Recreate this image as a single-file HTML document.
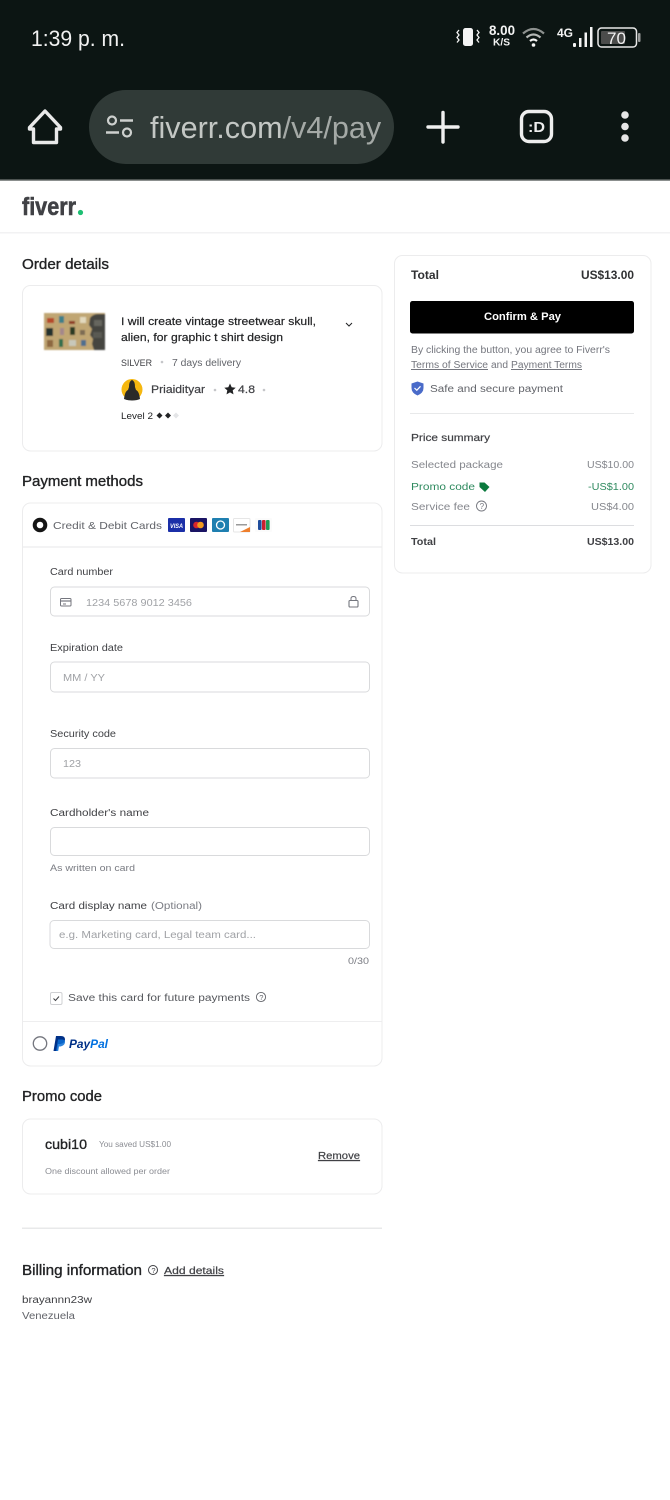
<!DOCTYPE html>
<html lang="en"><head><meta charset="utf-8"><title>Fiverr payment</title>
<style>
html,body{margin:0;padding:0;background:#fff}
svg{display:block;font-family:"Liberation Sans",sans-serif}
.root{filter:blur(.35px)}
text{white-space:pre}
.m{stroke-width:.2px;paint-order:stroke}
.h{font-size:14.5px;fill:#222325;stroke:#222325;stroke-width:.35px}
.l{font-size:10px;fill:#404145}
.p{font-size:10px;fill:#a0a2a6}
.s{font-size:10px;fill:#74767e}
.u{text-decoration:underline}
.box{fill:#fff;stroke:#ececed;stroke-width:1}
.inp{fill:#fff;stroke:#d9dadc;stroke-width:1}
</style></head><body>
<svg class="root" width="670" height="1500" viewBox="0 0 670 1500" xmlns="http://www.w3.org/2000/svg">
<defs><filter id="b" x="-5%" y="-5%" width="110%" height="110%"><feGaussianBlur stdDeviation=".7"/></filter></defs>
<rect width="670" height="1500" fill="#fff"/>
<!-- status + toolbar -->
<rect width="670" height="180" fill="#0c1513"/>
<rect y="179.500" width="670" height="1.500" fill="#8b8f8e"/>
<text x="31" y="46" font-size="22" fill="#f1f1f1" textLength="94" lengthAdjust="spacingAndGlyphs">1:39 p. m.</text>
<rect x="463" y="28" width="10" height="18" rx="2.500" fill="#f4f4f4"/>
<path d="M459 30l-2 2.500 2 2.500-2 2.500 2 2.500-2 2.500M477 30l2 2.500-2 2.500 2 2.500-2 2.500 2 2.500" fill="none" stroke="#f4f4f4" stroke-width="1.300"/>
<text x="489" y="35" font-size="13.500" font-weight="700" fill="#f4f4f4" textLength="26" lengthAdjust="spacingAndGlyphs">8.00</text>
<text x="493" y="45.500" font-size="10" font-weight="700" fill="#f4f4f4" textLength="17" lengthAdjust="spacingAndGlyphs">K/S</text>
<path d="M523 33.500q10.500-9 21 0" fill="none" stroke="#8d918f" stroke-width="2.200"/>
<path d="M526.500 37.500q7-6 14 0" fill="none" stroke="#b5b8b6" stroke-width="2.200"/>
<path d="M530 41q3.500-3 7 0" fill="none" stroke="#f4f4f4" stroke-width="2.200"/>
<circle cx="533.500" cy="45" r="1.800" fill="#f4f4f4"/>
<text x="557" y="37" font-size="12" font-weight="700" fill="#f4f4f4" textLength="16" lengthAdjust="spacingAndGlyphs">4G</text>
<rect x="573" y="43" width="3" height="4" rx="1" fill="#f4f4f4"/>
<rect x="579" y="38" width="2.500" height="9" fill="#f4f4f4"/>
<rect x="584.500" y="32.500" width="2.500" height="14.500" fill="#f4f4f4"/>
<rect x="590" y="27" width="2.500" height="20" fill="#f4f4f4"/>
<rect x="598" y="28" width="38.500" height="19" rx="3.500" fill="none" stroke="#e8e8e8" stroke-width="1.500"/>
<rect x="601" y="31" width="24" height="13" rx="1" fill="#4b4c4b"/>
<rect x="638" y="33" width="2.500" height="9" rx="1" fill="#9a9c9b"/>
<text x="607" y="44" font-size="16.500" fill="#f1f1f1" textLength="19" lengthAdjust="spacingAndGlyphs">70</text>

<path d="M45 111L29.500 127.500V129H33.500V142.500H56.500V129H60.500V127.500Z" fill="none" stroke="#e9e9e9" stroke-width="3.400" stroke-linejoin="round"/>
<rect x="89" y="90" width="305" height="74" rx="37" fill="#303a37"/>
<circle cx="112" cy="120.500" r="4" fill="none" stroke="#cdd0ce" stroke-width="2.200"/>
<path d="M120 120.500H133M106 132.500H119" stroke="#cdd0ce" stroke-width="2.500" fill="none"/>
<circle cx="127" cy="132.500" r="4" fill="none" stroke="#cdd0ce" stroke-width="2.200"/>
<svg x="150" y="100" width="231" height="56" viewBox="150 100 231 56"><text x="150" y="138" font-size="30.600" fill="#c3c7c4">fiverr.com<tspan fill="#a4a9a6">/v4/pay</tspan></text></svg>
<path d="M428 127H458M443 112.500V142" stroke="#f0f0f0" stroke-width="3.400" stroke-linecap="round"/>
<rect x="521.500" y="111.500" width="30" height="30" rx="7.500" fill="none" stroke="#eeeeee" stroke-width="3.400"/>
<text x="528" y="132" font-size="15" font-weight="700" fill="#eeeeee" textLength="17" lengthAdjust="spacingAndGlyphs">:D</text>
<circle cx="625" cy="115" r="3.800" fill="#e6e6e6"/><circle cx="625" cy="126.500" r="3.800" fill="#e6e6e6"/><circle cx="625" cy="138" r="3.800" fill="#e6e6e6"/>

<!-- header -->
<text x="22" y="215" font-size="25" font-weight="700" fill="#404145" stroke="#404145" stroke-width=".6" textLength="54" lengthAdjust="spacingAndGlyphs">fiverr</text>
<circle cx="80.500" cy="212.500" r="2.600" fill="#1dbf73"/>
<rect y="232" width="670" height="1.500" fill="#f2f2f3"/>

<!-- order details -->
<text x="22" y="269" class="h" textLength="87" lengthAdjust="spacingAndGlyphs">Order details</text>
<rect x="22.500" y="285.500" width="359.500" height="165.500" rx="8" class="box"/>
<g filter="url(#b)">
<rect x="44" y="313" width="61" height="37" fill="#c0a673"/>
<path d="M90 318q3-4 8-4h7v36H94l-2-6 1-5-3-4 2-6-3-4z" fill="#45453f"/>
<rect x="47" y="318" width="7" height="5" fill="#b5492a"/><rect x="59" y="316" width="5" height="7" fill="#3e7f88"/><rect x="69" y="321" width="6" height="3" fill="#8e3a28"/><rect x="80" y="317" width="6" height="6" fill="#e2d9bd"/>
<rect x="46" y="328" width="7" height="8" fill="#24312f"/><rect x="60" y="328" width="4" height="7" fill="#a4888b"/><rect x="70" y="327" width="5" height="8" fill="#2c3a24"/><rect x="80" y="330" width="5" height="5" fill="#7d6c52"/>
<rect x="47" y="340" width="6" height="7" fill="#8d6840"/><rect x="59" y="339" width="4" height="8" fill="#2e6e4e"/><rect x="69" y="340" width="7" height="6" fill="#c8c8ba"/><rect x="81" y="340" width="5" height="6" fill="#4d6e8e"/>
<rect x="94" y="320" width="8" height="6" fill="#66665e"/><rect x="93" y="332" width="9" height="6" fill="#5a5a52"/>
</g>
<g class="m" fill="#222325" stroke="#222325" font-size="11">
<text x="121" y="325" textLength="195" lengthAdjust="spacingAndGlyphs">I will create vintage streetwear skull,</text>
<text x="121" y="341" textLength="162" lengthAdjust="spacingAndGlyphs">alien, for graphic t shirt design</text>
</g>
<path d="M346 323l3 3 3-3" fill="none" stroke="#222325" stroke-width="1"/>
<text x="121" y="366" class="l" font-size="10" style="font-size:9.500px" textLength="31" lengthAdjust="spacingAndGlyphs">SILVER</text>
<circle cx="162" cy="362" r="1.300" fill="#c5c6c9"/>
<text x="172" y="366" class="l" style="fill:#62646a" textLength="69" lengthAdjust="spacingAndGlyphs">7 days delivery</text>
<circle cx="132" cy="389.500" r="10.500" fill="#f5b70f"/>
<path d="M124 399q1-8 4-9l1-3q0-6 3-7 3 1 3 7l1 3q3 1 4 9-3 1.500-8 1.500t-8-1.500z" fill="#2a2a28"/>
<text x="151" y="393" font-size="11" class="m" fill="#404145" stroke="#404145" textLength="54" lengthAdjust="spacingAndGlyphs">Priaidityar</text>
<circle cx="215" cy="390" r="1.300" fill="#c5c6c9"/>
<path d="M230 383.500l1.700 3.700 4 .5-3 2.700.8 4-3.500-2-3.500 2 .8-4-3-2.700 4-.5z" fill="#222325"/>
<text x="238" y="393" font-size="11" fill="#404145" stroke="#404145" class="m" textLength="17" lengthAdjust="spacingAndGlyphs">4.8</text>
<circle cx="264" cy="390" r="1.300" fill="#c5c6c9"/>
<text x="121" y="419" class="l" style="fill:#222325;font-size:9.500px" textLength="32" lengthAdjust="spacingAndGlyphs">Level 2</text>
<path d="M159.500 412.500l3 3-3 3-3-3zM168 412.500l3 3-3 3-3-3z" fill="#222325"/>
<path d="M176 412.500l3 3-3 3-3-3z" fill="#e4e5e7"/>

<!-- payment -->
<text x="22" y="486" class="h" textLength="121" lengthAdjust="spacingAndGlyphs">Payment methods</text>
<rect x="22.500" y="503" width="359.500" height="563" rx="8" class="box"/>
<rect x="23" y="546" width="358.500" height="2" fill="#f3f3f4"/>
<circle cx="40" cy="525" r="5.300" fill="#fff" stroke="#151515" stroke-width="4"/>
<text x="53" y="529" font-size="10.500" fill="#62646a" textLength="109" lengthAdjust="spacingAndGlyphs">Credit &amp; Debit Cards</text>
<rect x="168" y="518" width="17" height="14" rx="1" fill="#1b2fa8"/><text x="170" y="528" font-size="6.500" font-weight="700" font-style="italic" fill="#fff" textLength="13" lengthAdjust="spacingAndGlyphs">VISA</text>
<rect x="190" y="518" width="17" height="14" rx="1" fill="#1a1464"/><circle cx="196.500" cy="525" r="3.300" fill="#d8262c"/><circle cx="200.500" cy="525" r="3.300" fill="#f39b1f"/>
<rect x="212" y="518" width="17" height="14" rx="1" fill="#1f7fb0"/><circle cx="220.500" cy="525" r="4" fill="none" stroke="#fff" stroke-width="1.300"/>
<rect x="233.500" y="518.500" width="16.500" height="13.500" rx="1" fill="#fff" stroke="#e6e6e6"/><rect x="236" y="524" width="11" height="1.500" fill="#9a9a9a"/><path d="M240 532L250 527V532Z" fill="#ee7f2d"/>
<rect x="255" y="518" width="17" height="14" rx="1" fill="#fbfbfb"/><rect x="258" y="520" width="3.600" height="10" rx="1" fill="#1f4d9c"/><rect x="262" y="520" width="3.600" height="10" rx="1" fill="#c8202f"/><rect x="266" y="520" width="3.600" height="10" rx="1" fill="#1d9a56"/>

<text x="50" y="575" class="l" textLength="63" lengthAdjust="spacingAndGlyphs">Card number</text>
<rect x="50.500" y="587" width="319" height="29" rx="4" class="inp"/>
<rect x="60.500" y="598.500" width="10.500" height="7.500" rx="1" fill="none" stroke="#74767e" stroke-width="1"/><path d="M61 601H71" stroke="#74767e" stroke-width="1.200"/><path d="M63 604H66" stroke="#74767e" stroke-width="1"/>
<text x="86" y="606" class="p" textLength="106" lengthAdjust="spacingAndGlyphs">1234 5678 9012 3456</text>
<rect x="349" y="600.500" width="9" height="6.500" rx="1" fill="none" stroke="#74767e" stroke-width="1.100"/><path d="M351 600.500v-2q0-2 2.500-2t2.500 2v2" fill="none" stroke="#74767e" stroke-width="1"/>

<text x="50" y="651" class="l" textLength="73" lengthAdjust="spacingAndGlyphs">Expiration date</text>
<rect x="50.500" y="662" width="319" height="30" rx="4" class="inp"/>
<text x="63" y="681" class="p" textLength="42" lengthAdjust="spacingAndGlyphs">MM / YY</text>

<text x="50" y="737" class="l" textLength="66" lengthAdjust="spacingAndGlyphs">Security code</text>
<rect x="50.500" y="748.500" width="319" height="29.500" rx="4" class="inp"/>
<text x="63" y="767" class="p" textLength="18" lengthAdjust="spacingAndGlyphs">123</text>

<text x="50" y="816" class="l" textLength="99" lengthAdjust="spacingAndGlyphs">Cardholder's name</text>
<rect x="50.500" y="827.500" width="319" height="28" rx="4" class="inp"/>
<text x="50" y="871" font-size="9.500" fill="#7a7c83" textLength="85" lengthAdjust="spacingAndGlyphs">As written on card</text>

<text x="50" y="909" class="l" textLength="97" lengthAdjust="spacingAndGlyphs">Card display name</text>
<text x="151" y="909" class="s" style="fill:#7a7c83" textLength="51" lengthAdjust="spacingAndGlyphs">(Optional)</text>
<rect x="50" y="920.500" width="319.500" height="28" rx="4" class="inp"/>
<text x="59" y="938" class="p" textLength="197" lengthAdjust="spacingAndGlyphs">e.g. Marketing card, Legal team card...</text>
<text x="348" y="964" font-size="9.500" fill="#7a7c83" textLength="21" lengthAdjust="spacingAndGlyphs">0/30</text>

<rect x="50.500" y="992.500" width="11.500" height="12" rx="1.500" fill="#fff" stroke="#cfd0d3"/>
<path d="M53.500 998.500l2 2 3.500-4" fill="none" stroke="#404145" stroke-width="1"/>
<text x="68" y="1001" class="l" style="fill:#55575c" textLength="182" lengthAdjust="spacingAndGlyphs">Save this card for future payments</text>
<circle cx="261" cy="997" r="4.600" fill="none" stroke="#62646a" stroke-width=".9"/>
<text x="259.300" y="1000" font-size="7.500" fill="#62646a">?</text>
<rect x="23" y="1021" width="358.500" height="1" fill="#eeeeef"/>
<circle cx="40" cy="1043.500" r="6.700" fill="#fff" stroke="#74767e" stroke-width="1.300"/>
<path d="M56 1036h5q4 0 4 3.500t-4.500 4.500h-2.500l-1 7h-3.500z" fill="#003087"/>
<path d="M58 1039.500h4q3.500 0 3 3t-4.500 4h-1.500l-.8 4.500H56z" fill="#0a6fd6" opacity=".85"/>
<text x="69" y="1048" font-size="12" font-weight="700" font-style="italic" fill="#003087" textLength="39" lengthAdjust="spacingAndGlyphs">Pay<tspan fill="#0070e0">Pal</tspan></text>

<!-- promo -->
<text x="22" y="1101" class="h" textLength="80" lengthAdjust="spacingAndGlyphs">Promo code</text>
<rect x="22.500" y="1119" width="359.500" height="75" rx="8" class="box"/>
<text x="45" y="1149" font-size="14" fill="#222325" stroke="#222325" stroke-width=".35" textLength="42" lengthAdjust="spacingAndGlyphs">cubi10</text>
<text x="99" y="1147" font-size="8" fill="#8b8d93" textLength="72" lengthAdjust="spacingAndGlyphs">You saved US$1.00</text>
<text x="45" y="1174" font-size="8.500" fill="#8b8d93" textLength="125" lengthAdjust="spacingAndGlyphs">One discount allowed per order</text>
<text x="318" y="1159" font-size="10.500" class="u m" fill="#404145" stroke="#404145" textLength="42" lengthAdjust="spacingAndGlyphs">Remove</text>
<rect x="22" y="1227.500" width="360" height="1.500" fill="#e8e9ea"/>

<!-- billing -->
<text x="22" y="1275" class="h" textLength="120" lengthAdjust="spacingAndGlyphs">Billing information</text>
<circle cx="153" cy="1270" r="4.500" fill="none" stroke="#404145" stroke-width="1"/>
<text x="151.400" y="1273" font-size="7.500" fill="#404145">?</text>
<text x="164" y="1274" font-size="10.500" class="u m" fill="#404145" stroke="#404145" textLength="60" lengthAdjust="spacingAndGlyphs">Add details</text>
<text x="22" y="1303" class="l" textLength="70" lengthAdjust="spacingAndGlyphs">brayannn23w</text>
<text x="22" y="1319" class="l" style="fill:#62646a" textLength="53" lengthAdjust="spacingAndGlyphs">Venezuela</text>

<!-- summary -->
<rect x="394.500" y="255.500" width="256.500" height="317.500" rx="8" class="box"/>
<text x="411" y="279" font-size="12" font-weight="700" fill="#303133" textLength="28" lengthAdjust="spacingAndGlyphs">Total</text>
<text x="581" y="279" font-size="12" font-weight="700" fill="#303133" textLength="53" lengthAdjust="spacingAndGlyphs">US$13.00</text>
<rect x="410" y="301" width="224" height="32.500" rx="2.500" fill="#000"/>
<text x="484" y="320" font-size="11" font-weight="700" fill="#fff" textLength="77" lengthAdjust="spacingAndGlyphs">Confirm &amp; Pay</text>
<text x="411" y="353" font-size="10" fill="#74767e" textLength="199" lengthAdjust="spacingAndGlyphs">By clicking the button, you agree to Fiverr's</text>
<text x="411" y="368" font-size="10" fill="#74767e" class="u" textLength="77" lengthAdjust="spacingAndGlyphs">Terms of Service</text>
<text x="491" y="368" font-size="10" fill="#74767e" textLength="17" lengthAdjust="spacingAndGlyphs">and</text>
<text x="511" y="368" font-size="10" fill="#74767e" class="u" textLength="71" lengthAdjust="spacingAndGlyphs">Payment Terms</text>
<path d="M417.500 381.500l6 2v4.500q0 5-6 7.500-6-2.500-6-7.500v-4.500z" fill="#4a6bc9"/>
<path d="M414.500 388l2.300 2.300 3.700-4" fill="none" stroke="#fff" stroke-width="1.200"/>
<text x="430" y="392" class="l" style="fill:#62646a" textLength="133" lengthAdjust="spacingAndGlyphs">Safe and secure payment</text>
<rect x="410" y="413" width="224" height="1" fill="#e8e9ea"/>
<text x="411" y="441" font-size="10.500" class="m" fill="#404145" stroke="#404145" textLength="79" lengthAdjust="spacingAndGlyphs">Price summary</text>
<text x="411" y="468" class="s" style="fill:#85878d" textLength="92" lengthAdjust="spacingAndGlyphs">Selected package</text>
<text x="587" y="468" class="s" style="fill:#85878d" textLength="47" lengthAdjust="spacingAndGlyphs">US$10.00</text>
<text x="411" y="490" font-size="10" fill="#2f8a5f" textLength="64" lengthAdjust="spacingAndGlyphs">Promo code</text>
<path d="M479.500 482.500h5l5 4.500-4.500 5-5.500-5z" fill="#0b7a3e"/>
<text x="588" y="490" font-size="10.500" fill="#2f8a5f" textLength="46" lengthAdjust="spacingAndGlyphs">-US$1.00</text>
<text x="411" y="510" class="s" style="fill:#85878d" textLength="59" lengthAdjust="spacingAndGlyphs">Service fee</text>
<circle cx="481.500" cy="506" r="5" fill="none" stroke="#74767e" stroke-width=".9"/>
<text x="479.600" y="509.200" font-size="8" fill="#74767e">?</text>
<text x="591" y="510" class="s" style="fill:#85878d" textLength="43" lengthAdjust="spacingAndGlyphs">US$4.00</text>
<rect x="410" y="525" width="224" height="1" fill="#dcdde0"/>
<text x="411" y="545" font-size="10.500" font-weight="700" fill="#404145" textLength="25" lengthAdjust="spacingAndGlyphs">Total</text>
<text x="587" y="545" font-size="10.500" font-weight="700" fill="#404145" textLength="47" lengthAdjust="spacingAndGlyphs">US$13.00</text>
</svg>
</body></html>
